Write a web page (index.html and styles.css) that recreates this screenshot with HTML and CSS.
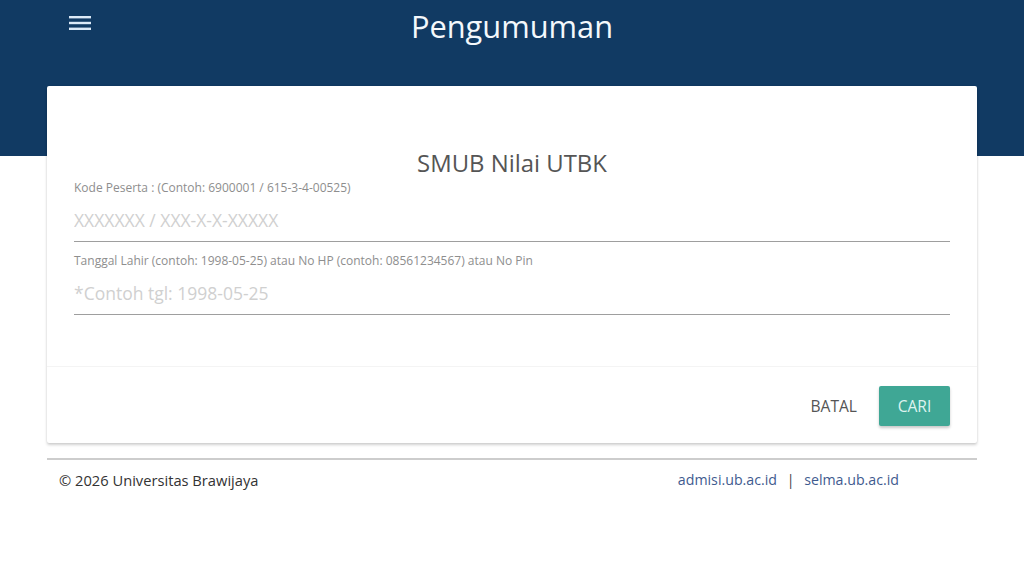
FILE: index.html
```html
<!DOCTYPE html>
<html lang="id">
  <head>
    <meta charset="UTF-8" />
    <meta name="viewport" content="width=device-width, initial-scale=1.0" />
    <title>Pengumuman</title>
    <link rel="stylesheet" href="styles.css">
  </head>
  <body>
    <header class="topbar">
      <button class="menu" aria-label="menu">
        <svg width="22" height="16" viewBox="0 0 22 16">
          <rect x="0" y="1" width="22" height="2.4" fill="#dbe9f7" />
          <rect x="0" y="6.8" width="22" height="2.4" fill="#dbe9f7" />
          <rect x="0" y="12.6" width="22" height="2.4" fill="#dbe9f7" />
        </svg>
      </button>
      <h1 class="title">Pengumuman</h1>
    </header>

    <main class="container">
      <form class="card">
        <div class="card-body">
          <h2 class="card-title">SMUB Nilai UTBK</h2>
          <label class="field">
            <span class="field-label">Kode Peserta : (Contoh: 6900001 / 615-3-4-00525)</span>
            <input class="field-input" type="text" placeholder="XXXXXXX / XXX-X-X-XXXXX" />
          </label>
          <label class="field">
            <span class="field-label">Tanggal Lahir (contoh: 1998-05-25) atau No HP (contoh: 08561234567) atau No Pin</span>
            <input class="field-input" type="text" placeholder="*Contoh tgl: 1998-05-25" />
          </label>
        </div>
        <div class="card-action">
          <button type="reset" class="btn-flat">Batal</button>
          <button type="submit" class="btn">Cari</button>
        </div>
      </form>

      <footer class="footer">
        <span>&copy; 2026 Universitas Brawijaya</span>
        <span class="links">
          <a href="#">admisi.ub.ac.id</a>
          <span class="sep">|</span>
          <a href="#">selma.ub.ac.id</a>
        </span>
      </footer>
    </main>
  </body>
</html>
```

FILE: styles.css
```css
html {
  background: #fff;
}
body {
  margin: 0;
  font-family: "Open Sans", "Noto Sans", sans-serif;
  background: #fff linear-gradient(#113a63, #113a63) no-repeat;
  background-size: 100% 156px;
  color: #333;
}
.topbar {
  position: relative;
  height: 86px;
}
.menu {
  position: absolute;
  left: 69px;
  top: 15px;
  padding: 0;
  border: 0;
  background: none;
  line-height: 0;
}
.title {
  margin: 0;
  padding-top: 4px;
  text-align: center;
  font-weight: 400;
  font-size: 30.8px;
  line-height: 44px;
  color: #f4f8fc;
}
.container {
  margin: 0 47px;
}
.card {
  background: #fff;
  border-radius: 2px;
  box-shadow: 0 2px 3px rgba(0, 0, 0, 0.18), 0 0 2px rgba(0, 0, 0, 0.08);
}
.card-body {
  padding: 61px 27px 51px;
}
.card-title {
  margin: 0 0 1px;
  text-align: center;
  font-weight: 400;
  font-size: 23.9px;
  line-height: 32px;
  color: #555;
}
.field {
  display: block;
}
.field + .field {
  margin-top: 11px;
}
.field-label {
  display: block;
  font-size: 12px;
  line-height: 16px;
  color: #8e8e8e;
}
.field-input {
  display: block;
  box-sizing: border-box;
  width: 100%;
  height: 46px;
  padding: 3px 0 0;
  border: 0;
  border-bottom: 1px solid #9e9e9e;
  outline: none;
  font-family: inherit;
  font-size: 17.5px;
  color: #333;
  background: transparent;
}
.field-input::placeholder {
  color: #d0d0d0;
}
.card-action {
  display: flex;
  justify-content: flex-end;
  align-items: center;
  gap: 22px;
  padding: 19px 27px 17px;
  border-top: 1px solid #f4f4f4;
}
.btn-flat,
.btn {
  height: 40px;
  border: 0;
  font-family: inherit;
  font-size: 15.6px;
  text-transform: uppercase;
  cursor: pointer;
}
.btn-flat {
  padding: 0;
  background: none;
  color: #555;
}
.btn {
  width: 71px;
  border-radius: 2px;
  background: #3fa795;
  color: #def3ef;
  box-shadow: 0 2px 3px rgba(0, 0, 0, 0.22);
}
.footer {
  display: flex;
  justify-content: space-between;
  margin-top: 15px;
  padding: 10px 78px 0 12px;
  border-top: 2px solid #cdcdcd;
  font-size: 14.7px;
  line-height: 20px;
  color: #333;
}
.links {
  font-size: 14.2px;
}
.links a {
  color: #3f5b8f;
  text-decoration: none;
}
.sep {
  margin: 0 6px;
  color: #444;
}
```
